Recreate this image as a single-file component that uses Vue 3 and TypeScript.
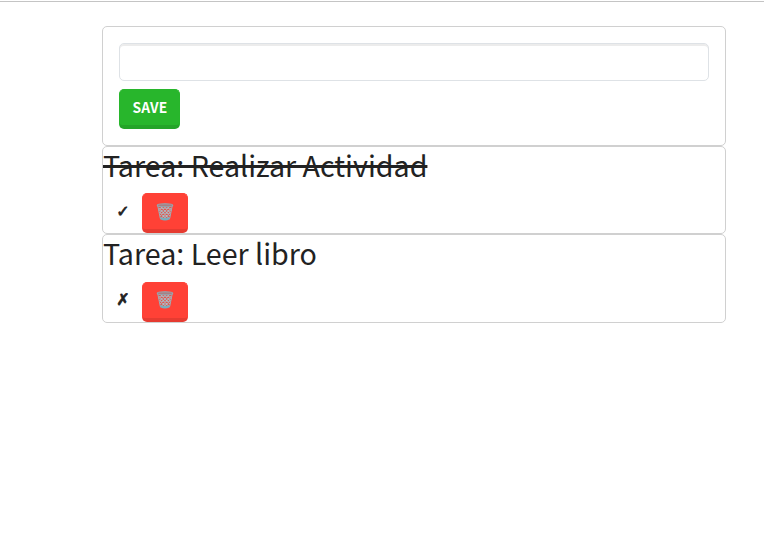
<script setup lang="ts">
import { ref } from 'vue'

interface Task {
  title: string
  done: boolean
}

const name = ref('')
const tasks = ref<Task[]>([
  { title: 'Realizar Actividad', done: true },
  { title: 'Leer libro', done: false },
])

function save(): void {
  if (!name.value) return
  tasks.value.push({ title: name.value, done: false })
  name.value = ''
}

function toggle(task: Task): void {
  task.done = !task.done
}

function remove(index: number): void {
  tasks.value.splice(index, 1)
}
</script>

<template>
  <div class="page">
    <main class="column">
      <form class="card form" @submit.prevent="save">
        <input v-model="name" class="field" type="text" />
        <button class="btn save" type="submit">SAVE</button>
      </form>
      <section v-for="(task, i) in tasks" :key="i" class="card task">
        <h2 class="title"><span :class="{ done: task.done }">Tarea: {{ task.title }}</span></h2>
        <div class="actions">
          <button class="mark" type="button" @click="toggle(task)">{{ task.done ? '✓' : '✗' }}</button>
          <button class="btn remove" type="button" @click="remove(i)">
            <svg class="bin" viewBox="0 0 18 18">
              <path d="M2 3 4.200 16Q9 18.300 13.800 16L16 3Z" fill="#e0564f" />
              <path
                d="M2.600 5l11 11M5 4l9 9M8.500 4l6 6M11.500 4l4 4M3.400 9l7 7M15.400 5L4.500 16M13 4L4 13M9.500 4l-6 6M6.500 4L2.800 7.700M14.600 9l-7 7"
                stroke="#a9c0c9"
                stroke-width="1.050"
                fill="none"
              />
              <path d="M1.800 3 4.300 15.500M16.200 3 13.700 15.500" stroke="#a3a9b0" stroke-width="1" fill="none" />
              <path d="M4.200 14.300Q9 15.800 13.800 14.300L13.400 16.500Q9 18.300 4.600 16.500Z" fill="#78adbd" />
              <ellipse cx="9" cy="2.300" rx="7.800" ry="1.500" fill="#a88084" stroke="#8fadb8" stroke-width="1.100" />
            </svg>
          </button>
        </div>
      </section>
    </main>
  </div>
</template>

<style>
body {
  background: #fff;
}
</style>

<style scoped>
.page {
  box-sizing: border-box;
  margin-top: 1px;
  padding: 24px 38px 0 102px;
  border-top: 1px solid #c4c4c4;
  font-family: 'Noto Sans CJK SC', 'Open Sans', sans-serif;
  color: #222;
}
.card {
  box-sizing: border-box;
  border: 1px solid #d0d0d0;
  border-radius: 5px;
}
.form {
  display: flex;
  flex-direction: column;
  align-items: flex-start;
  gap: 8px;
  height: 120px;
  padding: 16px;
}
.field {
  box-sizing: border-box;
  width: 100%;
  height: 38px;
  padding: 6px 12px;
  border: 1px solid #dee2e6;
  border-radius: 5px;
  outline: none;
  font: inherit;
  box-shadow: inset 0 2px 0 rgba(0, 0, 0, 0.075);
}
.btn {
  box-sizing: border-box;
  display: flex;
  align-items: center;
  justify-content: center;
  height: 40px;
  padding: 0;
  border: 1px solid;
  border-bottom-width: 4px;
  border-radius: 5px;
  font-family: inherit;
  color: #fff;
}
.save {
  width: 61px;
  padding: 0 0 2px 1px;
  background: #28b62c;
  border-color: #28b62c #28b62c #24a428;
  font-size: 13.800px;
  font-weight: 700;
  letter-spacing: 0.250px;
  line-height: 20px;
}
.task {
  height: 88.400px;
}
.title {
  height: 38.400px;
  margin: 0 0 8px;
  font-size: 28.650px;
  font-weight: 400;
  line-height: 35px;
}
.done {
  text-decoration: line-through;
  text-decoration-thickness: 3px;
}
.actions {
  display: flex;
}
.mark {
  width: 39px;
  height: 36px;
  padding: 0 0 0 1px;
  border: 0;
  background: none;
  color: #222;
  font-family: 'DejaVu Sans', sans-serif;
  font-size: 16px;
  font-weight: 700;
  -webkit-text-stroke: 0.700px #222;
}
.remove {
  width: 46px;
  background: #ff4136;
  border-color: #ff4136 #ff4136 #e63b31;
}
.bin {
  width: 18px;
  height: 18px;
}
</style>
